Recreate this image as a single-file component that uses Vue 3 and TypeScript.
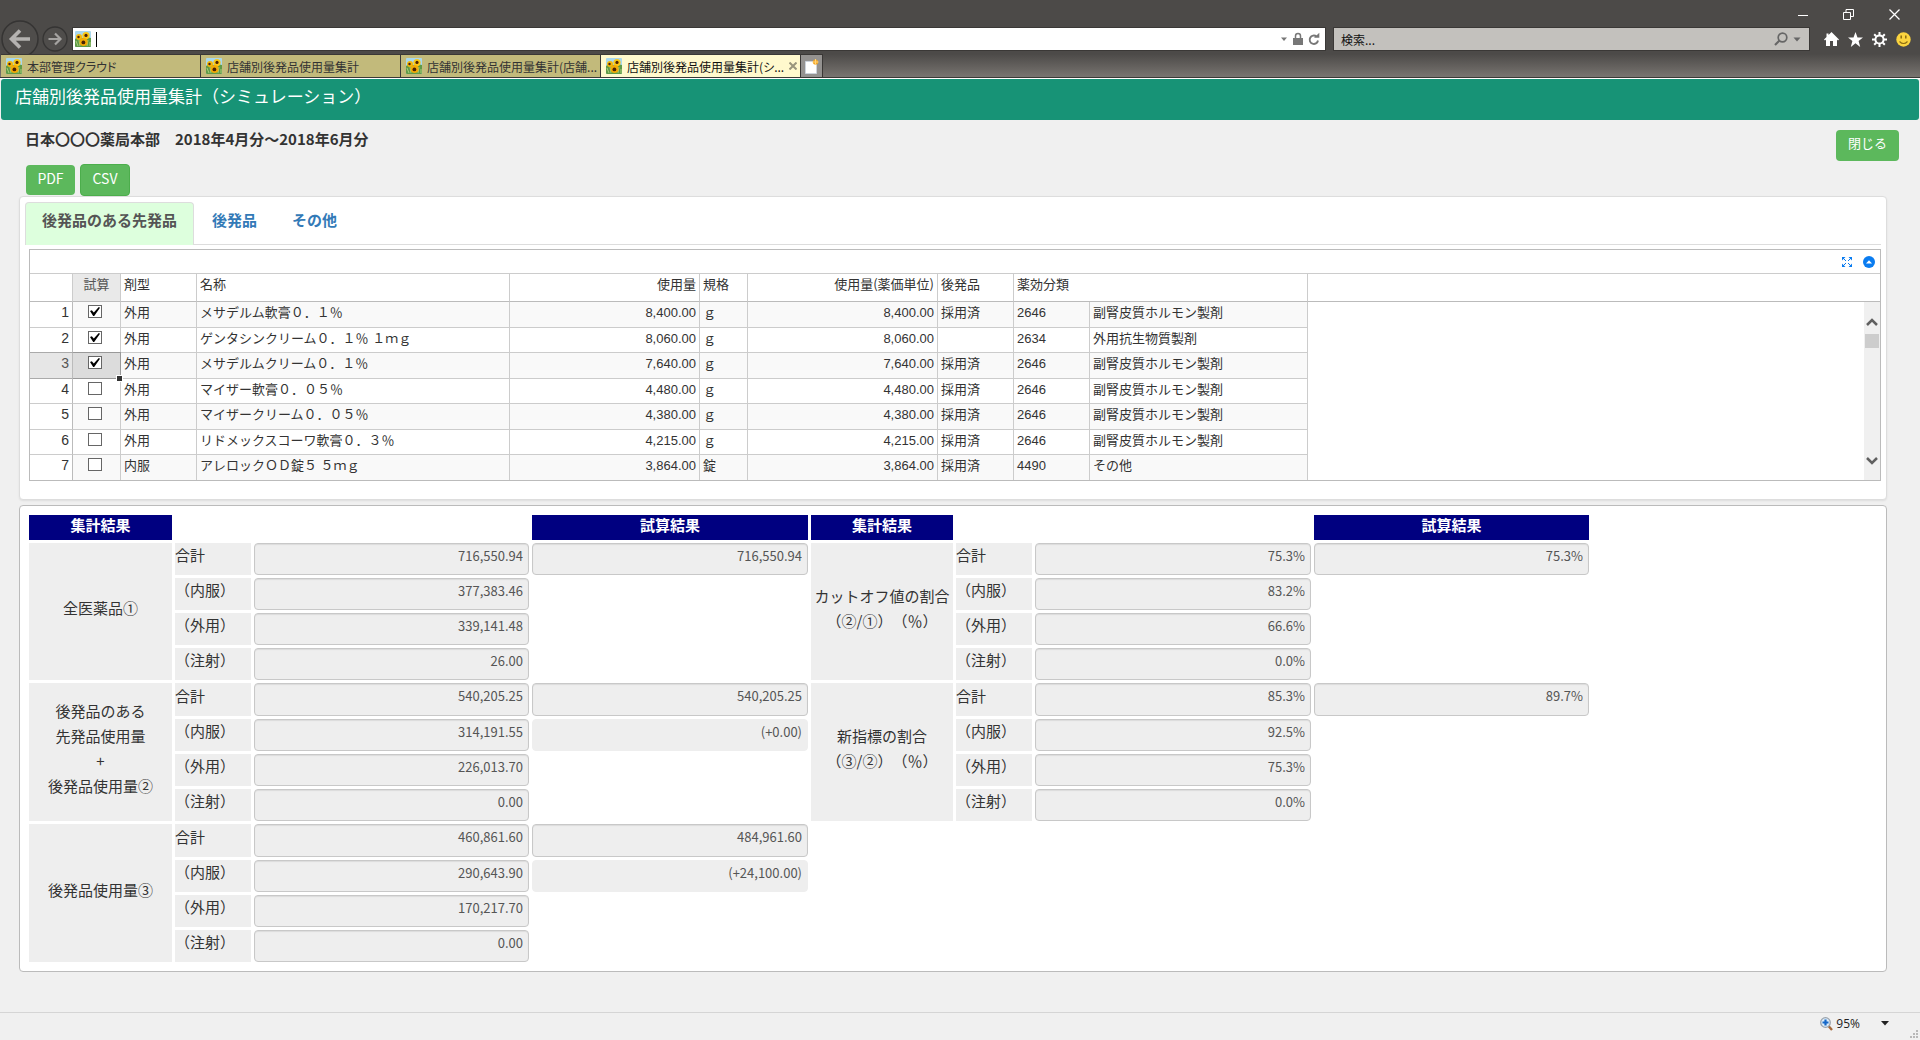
<script setup lang="ts">
import { reactive, ref } from 'vue'

interface Drug {
  trial: boolean
  form: string
  name: string
  amount: string
  unit: string
  generic: string
  code: string
  category: string
}

interface Line {
  label: string
  value: string
  trial?: string
  plain?: boolean
}

interface Group {
  title: string[]
  lines: Line[]
}

const browserTabs = [
  '本部管理クラウド',
  '店舗別後発品使用量集計',
  '店舗別後発品使用量集計(店舗...',
  '店舗別後発品使用量集計(シ...',
]
const activeBrowserTab = 3

const tabs = ['後発品のある先発品', '後発品', 'その他']
const activeTab = ref(0)
const selectedRow = ref(2)

const steroid = '副腎皮質ホルモン製剤'
const drugs = reactive<Drug[]>([
  { trial: true, form: '外用', name: 'メサデルム軟膏０．１％', amount: '8,400.00', unit: 'ｇ', generic: '採用済', code: '2646', category: steroid },
  { trial: true, form: '外用', name: 'ゲンタシンクリーム０．１％ １ｍｇ', amount: '8,060.00', unit: 'ｇ', generic: '', code: '2634', category: '外用抗生物質製剤' },
  { trial: true, form: '外用', name: 'メサデルムクリーム０．１％', amount: '7,640.00', unit: 'ｇ', generic: '採用済', code: '2646', category: steroid },
  { trial: false, form: '外用', name: 'マイザー軟膏０．０５％', amount: '4,480.00', unit: 'ｇ', generic: '採用済', code: '2646', category: steroid },
  { trial: false, form: '外用', name: 'マイザークリーム０．０５％', amount: '4,380.00', unit: 'ｇ', generic: '採用済', code: '2646', category: steroid },
  { trial: false, form: '外用', name: 'リドメックスコーワ軟膏０．３％', amount: '4,215.00', unit: 'ｇ', generic: '採用済', code: '2646', category: steroid },
  { trial: false, form: '内服', name: 'アレロックＯＤ錠５ ５ｍｇ', amount: '3,864.00', unit: '錠', generic: '採用済', code: '4490', category: 'その他' },
])

const usage: Group[] = [
  {
    title: ['全医薬品①'],
    lines: [
      { label: '合計', value: '716,550.94', trial: '716,550.94' },
      { label: '（内服）', value: '377,383.46' },
      { label: '（外用）', value: '339,141.48' },
      { label: '（注射）', value: '26.00' },
    ],
  },
  {
    title: ['後発品のある', '先発品使用量', '+', '後発品使用量②'],
    lines: [
      { label: '合計', value: '540,205.25', trial: '540,205.25' },
      { label: '（内服）', value: '314,191.55', trial: '(+0.00)', plain: true },
      { label: '（外用）', value: '226,013.70' },
      { label: '（注射）', value: '0.00' },
    ],
  },
  {
    title: ['後発品使用量③'],
    lines: [
      { label: '合計', value: '460,861.60', trial: '484,961.60' },
      { label: '（内服）', value: '290,643.90', trial: '(+24,100.00)', plain: true },
      { label: '（外用）', value: '170,217.70' },
      { label: '（注射）', value: '0.00' },
    ],
  },
]

const ratios: Group[] = [
  {
    title: ['カットオフ値の割合', '（②/①）（％）'],
    lines: [
      { label: '合計', value: '75.3%', trial: '75.3%' },
      { label: '（内服）', value: '83.2%' },
      { label: '（外用）', value: '66.6%' },
      { label: '（注射）', value: '0.0%' },
    ],
  },
  {
    title: ['新指標の割合', '（③/②）（％）'],
    lines: [
      { label: '合計', value: '85.3%', trial: '89.7%' },
      { label: '（内服）', value: '92.5%' },
      { label: '（外用）', value: '75.3%' },
      { label: '（注射）', value: '0.0%' },
    ],
  },
]
</script>

<template>
  <svg class="defs" aria-hidden="true">
    <symbol id="sunflower" viewBox="0 0 16 16">
      <rect width="16" height="16" rx="1" fill="#a9d8ee" />
      <path d="M0 8l3-2 4 1 4-1 5 1v8a1 1 0 0 1-1 1H1a1 1 0 0 1-1-1z" fill="#5f9a48" />
      <path d="M1 10l2 5M4 9l1 6M13 9l-1 6M15 11v4" stroke="#a8cf7c" />
      <circle cx="4" cy="6" r="3" fill="#f5b90c" />
      <circle cx="11" cy="4.600" r="3.600" fill="#fbc816" />
      <circle cx="8.600" cy="11" r="4.100" fill="#f2ac08" />
      <circle cx="3.500" cy="6" r="1.200" fill="#4a2306" />
      <circle cx="11" cy="4.400" r="1.600" fill="#4a2306" />
      <circle cx="8.400" cy="11.400" r="1.900" fill="#4a2306" />
    </symbol>
  </svg>

  <div class="window">
    <header class="chrome">
      <div class="caption">
        <button type="button" aria-label="最小化">
          <svg width="10" height="10"><path d="M0 5.500h10" stroke="#fff" /></svg>
        </button>
        <button type="button" aria-label="元に戻す">
          <svg width="11" height="11" fill="none" stroke="#fff"><path d="M.5 3.500h7v7h-7zM3 3V.5h7.500v7H8" /></svg>
        </button>
        <button type="button" aria-label="ウィンドウを閉じる">
          <svg width="11" height="11" stroke="#fff" stroke-width="1.300"><path d="M.5.5l10 10M10.500.5l-10 10" /></svg>
        </button>
      </div>

      <div class="toolbar">
        <button type="button" class="back" aria-label="戻る">
          <svg width="38" height="38" viewBox="0 0 38 38" fill="none">
            <circle cx="19" cy="19" r="18" stroke="#353433" stroke-width="1.500" fill="#4f4d4b" />
            <path d="M29 19H12M19 10.500L10.500 19l8.500 8.500" stroke="#b4b2b0" stroke-width="3.600" />
          </svg>
        </button>
        <button type="button" class="forward" aria-label="進む">
          <svg width="26" height="26" viewBox="0 0 26 26" fill="none">
            <circle cx="13" cy="13" r="12" stroke="#353433" stroke-width="1.300" fill="#4f4d4b" />
            <path d="M6.500 13h11M13 7.500l5.500 5.500-5.500 5.500" stroke="#a5a3a1" stroke-width="2.200" />
          </svg>
        </button>
        <div class="address">
          <svg width="16" height="16"><use href="#sunflower" /></svg>
          <span class="caret"></span>
          <input type="text" aria-label="アドレス" />
          <svg width="8" height="5"><path d="M1 .5h6L4 4z" fill="#777" /></svg>
          <svg width="10" height="14" viewBox="0 0 10 14">
            <path d="M2.500 6V4a2.500 2.500 0 0 1 5 0v2" fill="none" stroke="#777" stroke-width="1.500" />
            <path d="M0 6h10v7H0z" fill="#777" />
          </svg>
          <svg width="12" height="14" viewBox="0 0 12 14">
            <path d="M8.500 4.500A4.200 4.200 0 1 0 10 8.500" fill="none" stroke="#777" stroke-width="1.900" />
            <path d="M6 5.800h5.300V.8z" fill="#777" />
          </svg>
        </div>
        <div class="search">
          <input type="text" aria-label="検索" placeholder="検索..." />
          <svg width="14" height="14" viewBox="0 0 14 14" fill="none" stroke="#666">
            <circle cx="8.500" cy="5.500" r="4.300" stroke-width="1.700" />
            <path d="M5.500 8.500L1 13" stroke-width="2.200" />
          </svg>
          <svg width="8" height="5"><path d="M.5.5h7L4 4.500z" fill="#666" /></svg>
        </div>
        <div class="tools">
          <button type="button" aria-label="ホーム">
            <svg width="15" height="14" viewBox="0 0 15 14" fill="#fff">
              <path d="M7.500 0L15 7.500l-1 1-1-1V14H9V9H6v5H2V7.500l-1 1-1-1L2.500 5V1.500h2V3z" />
            </svg>
          </button>
          <button type="button" aria-label="お気に入り">
            <svg width="15" height="15" viewBox="0 0 15 15" fill="#fff">
              <path d="M7.500 0l2 5.400H15l-4.400 3.500L12.200 15 7.500 11.300 2.800 15l1.600-6.100L0 5.400h5.500z" />
            </svg>
          </button>
          <button type="button" aria-label="設定">
            <svg width="15" height="15" viewBox="0 0 15 15" fill="none" stroke="#fff">
              <circle cx="7.500" cy="7.500" r="4.100" stroke-width="2" />
              <path d="M7.500 0v3M7.500 12v3M0 7.500h3M12 7.500h3M2.200 2.200l2 2M10.800 10.800l2 2M12.800 2.200l-2 2M4.200 10.800l-2 2" stroke-width="2" />
            </svg>
          </button>
          <button type="button" aria-label="フィードバック">
            <svg width="15" height="15" viewBox="0 0 15 15" fill="none">
              <circle cx="7.500" cy="7.500" r="7.200" fill="#fbd43f" />
              <path d="M5.200 3.500v3M9.800 3.500v3" stroke="#8a6a10" stroke-width="1.500" />
              <path d="M3.500 9.500q4 4 8 0" stroke="#8a6a10" stroke-width="1.100" />
            </svg>
          </button>
        </div>
      </div>

      <div class="tabstrip">
        <button
          v-for="(tab, i) in browserTabs"
          :key="tab"
          type="button"
          class="btab"
          :class="{ active: i === activeBrowserTab }"
        >
          <svg width="16" height="16"><use href="#sunflower" /></svg>
          <span>{{ tab }}</span>
          <svg v-if="i === activeBrowserTab" class="x" width="8" height="8" stroke="#99957c" stroke-width="2"><path d="M.5.5l7 7M7.500.5l-7 7" /></svg>
        </button>
        <button type="button" class="newtab" aria-label="新しいタブ">
          <svg width="14" height="15" viewBox="0 0 14 15">
            <path d="M.5 2.500h11v12H.5z" fill="#fff" stroke="#ccd3dc" />
            <circle cx="10.500" cy="3" r="2.600" fill="#f5a623" />
            <path d="M10.500 0v6M7.500 3h6" stroke="#ffd37a" />
          </svg>
        </button>
      </div>
    </header>

    <main>
      <h1>店舗別後発品使用量集計（シミュレーション）</h1>

      <div class="heading">
        <div>
          <h2>日本〇〇〇薬局本部　2018年4月分～2018年6月分</h2>
          <div class="exports">
            <button type="button" class="btn">PDF</button>
            <button type="button" class="btn outlined">CSV</button>
          </div>
        </div>
        <button type="button" class="btn close">閉じる</button>
      </div>

      <section class="panel list">
        <nav>
          <a
            v-for="(tab, i) in tabs"
            :key="tab"
            href="#"
            :class="{ active: i === activeTab }"
            @click.prevent="activeTab = i"
          >{{ tab }}</a>
        </nav>

        <div class="grid">
          <div class="gridbar">
            <button type="button" aria-label="全画面">
              <svg width="10" height="10" viewBox="0 0 10 10" fill="#0a7cf0">
                <path d="M0 0h3.500L0 3.500zM10 0v3.500L6.500 0zM0 10V6.500L3.500 10zM10 10H6.500L10 6.500z" />
                <path d="M1 1l3 3M9 1L6 4M1 9l3-3M9 9L6 6" stroke="#0a7cf0" />
              </svg>
            </button>
            <button type="button" aria-label="折りたたむ">
              <svg width="12" height="12" viewBox="0 0 12 12">
                <circle cx="6" cy="6" r="6" fill="#0a7cf0" />
                <path d="M3 7.500L6 4.300l3 3.200z" fill="#fff" />
              </svg>
            </button>
          </div>
          <div class="gridbody">
            <table class="drugs">
              <colgroup>
                <col class="c-no" /><col class="c-check" /><col class="c-form" /><col class="c-name" />
                <col class="c-amount" /><col class="c-unit" /><col class="c-amount" /><col class="c-code" />
                <col class="c-code" /><col class="c-category" />
              </colgroup>
              <thead>
                <tr>
                  <th></th>
                  <th class="check on">試算</th>
                  <th>剤型</th>
                  <th>名称</th>
                  <th class="num">使用量</th>
                  <th>規格</th>
                  <th class="num">使用量(薬価単位)</th>
                  <th>後発品</th>
                  <th colspan="2">薬効分類</th>
                </tr>
              </thead>
              <tbody>
                <tr v-for="(d, i) in drugs" :key="d.name">
                  <th scope="row" :class="{ on: i === selectedRow }">{{ i + 1 }}</th>
                  <td class="check" :class="{ selected: i === selectedRow }" @click="selectedRow = i">
                    <input v-model="d.trial" type="checkbox" :aria-label="d.name" />
                  </td>
                  <td>{{ d.form }}</td>
                  <td>{{ d.name }}</td>
                  <td class="num">{{ d.amount }}</td>
                  <td>{{ d.unit }}</td>
                  <td class="num">{{ d.amount }}</td>
                  <td>{{ d.generic }}</td>
                  <td>{{ d.code }}</td>
                  <td>{{ d.category }}</td>
                </tr>
              </tbody>
            </table>
            <div class="track">
              <div class="bar">
                <svg width="12" height="8"><path d="M1 7l5-5 5 5" fill="none" stroke="#606060" stroke-width="2.500" /></svg>
                <div class="thumb"></div>
                <svg class="down" width="12" height="8"><path d="M1 1l5 5 5-5" fill="none" stroke="#606060" stroke-width="2.500" /></svg>
              </div>
            </div>
          </div>
        </div>
      </section>

      <section class="panel results">
        <table class="totals">
          <colgroup>
            <col class="t-group" /><col class="t-label" /><col class="t-value" /><col class="t-wide" />
            <col class="t-ratio" /><col class="t-label" /><col class="t-wide" /><col class="t-value" />
          </colgroup>
          <thead>
            <tr>
              <th>集計結果</th>
              <td colspan="2"></td>
              <th>試算結果</th>
              <th>集計結果</th>
              <td colspan="2"></td>
              <th>試算結果</th>
            </tr>
          </thead>
          <tbody v-for="(g, gi) in usage" :key="gi">
            <tr v-for="(line, li) in g.lines" :key="line.label">
              <template v-for="(side, si) in [g, ratios[gi]]" :key="si">
                <template v-if="side">
                  <th v-if="li === 0" class="group" rowspan="4" scope="rowgroup">
                    <div v-for="t in side.title" :key="t">{{ t }}</div>
                  </th>
                  <th class="label" scope="row">{{ side.lines[li].label }}</th>
                  <td><input readonly :value="side.lines[li].value" :aria-label="side.title.join('') + side.lines[li].label" /></td>
                  <td>
                    <input
                      v-if="side.lines[li].trial"
                      readonly
                      :class="{ plain: side.lines[li].plain }"
                      :value="side.lines[li].trial"
                      :aria-label="'試算 ' + side.title.join('') + side.lines[li].label"
                    />
                  </td>
                </template>
              </template>
            </tr>
          </tbody>
        </table>
      </section>
    </main>

    <footer>
      <button type="button" class="zoom">
        <svg width="13" height="14" viewBox="0 0 13 14" fill="none">
          <path d="M8.500 9l3.500 4" stroke="#a5683a" stroke-width="2.400" />
          <circle cx="5.500" cy="5.500" r="4.800" fill="#dcecf8" stroke="#9aa3ad" stroke-width="1.300" />
          <path d="M5.500 2.500v6M2.500 5.500h6" stroke="#1467c8" stroke-width="2.200" />
        </svg>
        <span>95%</span>
        <svg width="8" height="5"><path d="M0 0h8L4 4.500z" fill="#222" /></svg>
      </button>
      <svg class="grip" width="9" height="9" fill="#b8b8b8">
        <path d="M6 0h2v2H6zM3 3h2v2H3zM6 3h2v2H6zM0 6h2v2H0zM3 6h2v2H3zM6 6h2v2H6z" />
      </svg>
    </footer>
  </div>
</template>

<style>
body {
  margin: 0;
  background: #f0f0f0;
}
</style>

<style scoped>
.defs {
  position: absolute;
  width: 0;
  height: 0;
}

.window {
  display: flex;
  flex-direction: column;
  min-height: 100vh;
  font-family: "Noto Sans CJK JP", sans-serif;
  font-size: 15px;
  color: #333;
  text-spacing-trim: space-all;
}

button,
input {
  font-family: inherit;
}

button {
  padding: 0;
  border: 0;
  background: none;
  color: inherit;
}

svg {
  display: block;
  flex: none;
}

/* browser frame */
.chrome {
  background: #4c4a48;
  border-bottom: 1px solid #fff;
}

.caption {
  display: flex;
  justify-content: flex-end;
  align-items: center;
  gap: 35px;
  height: 22px;
  padding: 7px 20px 0 0;
  box-sizing: border-box;
}

.toolbar {
  display: flex;
  align-items: center;
  height: 32px;
  padding-top: 2px;
  box-sizing: border-box;
}

.back {
  margin-left: 1px;
}

.forward {
  margin: 0 4px 0 3px;
}

.address,
.search {
  display: flex;
  align-items: center;
  height: 24px;
  border: 1px solid #3a3836;
  box-sizing: border-box;
  background: #fff;
}

.address {
  flex: 1;
  gap: 5px;
  padding: 0 5px 0 2px;
}

.caret {
  width: 1px;
  height: 15px;
  background: #000;
}

.address input,
.search input {
  flex: 1;
  min-width: 0;
  padding: 0;
  border: 0;
  outline: 0;
  background: none;
  font-size: 12px;
}

.search {
  gap: 5px;
  width: 477px;
  margin-left: 7px;
  padding: 0 8px 0 7px;
  background: #c3c1bd;
}

.search input::placeholder {
  color: #111;
  opacity: 1;
}

.tools {
  display: flex;
  gap: 9px;
  margin: 0 9px 0 14px;
}

.tabstrip {
  position: relative;
  display: flex;
  height: 23px;
  padding-left: 1px;
  border-bottom: 1px solid #3a3836;
  background: linear-gradient(#4c4a48, #787470);
}

.btab {
  display: flex;
  align-items: center;
  gap: 5px;
  width: 200px;
  padding: 0 8px 0 5px;
  border: solid #3a3836;
  border-width: 1px 1px 0 0;
  background: #c2ba7b;
  font-size: 12px;
  font-feature-settings: "palt";
  white-space: nowrap;
  color: #333;
}

.btab.active {
  background: #fff9cd;
  color: #111;
}

.btab .x {
  margin-left: auto;
}

.newtab {
  display: flex;
  align-items: center;
  justify-content: center;
  width: 22px;
  background: #949290;
  border: solid #3a3836;
  border-width: 1px 1px 0 0;
}

/* page */
main {
  flex: 1;
}

h1 {
  margin: 0 1px;
  padding: 0 14px 8px;
  border-radius: 3px;
  background: #179376;
  color: #fff;
  font-size: 17px;
  font-weight: 400;
  line-height: 33px;
}

.heading {
  display: flex;
  justify-content: space-between;
  padding: 7px 21px 0 25px;
}

h2 {
  margin: 0;
  font-size: 15px;
  line-height: 24px;
}

.exports {
  display: flex;
  align-items: center;
  gap: 5px;
  margin: 13px 0 0 1px;
}

.btn {
  width: 49px;
  height: 30px;
  padding-bottom: 4px;
  border-radius: 4px;
  background: #5cb85c;
  color: #fff;
  font-size: 14px;
}

.outlined {
  width: 50px;
  height: 32px;
  border: 1px solid #4cae4c;
}

.close {
  width: 63px;
  height: 31px;
  margin-top: 3px;
  padding-bottom: 6px;
  font-size: 13px;
}

.panel {
  margin: 0 33px 5px 19px;
  border: 1px solid #ddd;
  border-radius: 4px;
  background: #fff;
}

.list {
  padding: 5px 5px 18px;
  box-shadow: 0 1px 2px rgba(0, 0, 0, 0.08);
}

nav {
  display: flex;
  gap: 1px;
  border-bottom: 1px solid #ddd;
}

nav a {
  height: 42px;
  padding: 0 16px;
  border: 1px solid transparent;
  border-bottom: 0;
  border-radius: 4px 4px 0 0;
  box-sizing: border-box;
  color: #337ab7;
  font-weight: 700;
  line-height: 34px;
  text-decoration: none;
}

nav a.active {
  margin-bottom: -1px;
  height: 43px;
  border-color: #ddd;
  background: #dfd;
  color: #555;
}

.grid {
  margin: 4px 0 0 4px;
  border: 1px solid #bbb;
}

.gridbar {
  display: flex;
  justify-content: flex-end;
  align-items: center;
  gap: 11px;
  height: 23px;
  padding-right: 5px;
  border-bottom: 1px solid #ccc;
}

.gridbody {
  display: flex;
}

.drugs {
  width: 1278px;
  table-layout: fixed;
  border-spacing: 0;
  font-size: 13px;
  line-height: 18px;
}

.c-no { width: 43px; }
.c-check { width: 48px; }
.c-form { width: 76px; }
.c-name { width: 313px; }
.c-amount { width: 190px; }
.c-unit { width: 48px; }
.c-code { width: 76px; }
.c-category { width: 218px; }

.drugs th,
.drugs td {
  height: 25px;
  padding: 1px 3px 0;
  border: solid #ccc;
  border-width: 0 1px 1px 0;
  box-sizing: border-box;
  font-weight: 400;
  text-align: left;
  vertical-align: top;
  white-space: nowrap;
}

.drugs td {
  padding-top: 2px;
  font-family: "Liberation Sans", "Noto Sans CJK JP", sans-serif;
}

.drugs thead th {
  height: 28px;
  border-bottom-color: #bbb;
}

.drugs tbody th {
  border-right-color: #bbb;
  font-family: "Liberation Sans", sans-serif;
  font-size: 14px;
  text-align: right;
}

.drugs tbody tr:nth-child(odd) td,
.drugs tbody tr:nth-child(odd) th {
  height: 26px;
}

.drugs tbody tr:nth-child(odd) td {
  background: #f9f9f9;
}

.drugs tbody tr:last-child td,
.drugs tbody tr:last-child th {
  height: 25px;
  border-bottom: 0;
}

.drugs .num {
  text-align: right;
}

.drugs .check {
  text-align: center;
}

.drugs td.check {
  padding-right: 6px;
}

.drugs thead .on {
  background: #e9e9e9;
  color: #555;
}

.drugs tbody .on {
  border-bottom-color: #aaa;
  background: #e6e6e6;
  box-shadow: 0 -1px #aaa;
  color: #555;
}

.drugs tbody tr:nth-child(odd) .selected {
  position: relative;
  background: #dcdcdc;
  box-shadow: 0 -1px #999;
  border-color: #999;
}

.selected::after {
  content: "";
  position: absolute;
  right: -3px;
  bottom: -4px;
  width: 5px;
  height: 5px;
  border: 1px solid #fff;
  background: #333;
}

.check input {
  display: block;
  appearance: none;
  width: 14px;
  height: 13px;
  margin: 1px auto 0;
  border: 1px solid #666;
  background: #fff;
}

.check input:checked::after {
  content: "";
  display: block;
  width: 10px;
  height: 9px;
  margin: 1px;
  background: #000;
  clip-path: polygon(0 45%, 18% 35%, 38% 62%, 88% 0, 100% 8%, 42% 100%, 32% 100%);
}

.track {
  display: flex;
  flex: 1;
  flex-direction: column;
  justify-content: flex-end;
}

.track::before {
  content: "";
  height: 27px;
  border-bottom: 1px solid #bbb;
}

.bar {
  display: flex;
  flex: 1;
  flex-direction: column;
  align-items: center;
  align-self: flex-end;
  width: 16px;
  padding: 16px 0 15px;
  box-sizing: border-box;
  background: #f0f0f0;
}

.thumb {
  width: 14px;
  height: 14px;
  margin-top: 8px;
  background: #cdcdcd;
}

.down {
  margin-top: auto;
}

.results {
  padding: 6px;
  border-color: #bbb;
}

.totals {
  width: 1566px;
  table-layout: fixed;
  border-spacing: 3px;
  line-height: 25px;
}

.t-group { width: 143px; }
.t-ratio { width: 142px; }
.t-label { width: 76px; }
.t-value { width: 275px; }
.t-wide { width: 276px; }

.totals th,
.totals td {
  height: 32px;
  padding: 0;
  box-sizing: border-box;
  font-weight: 400;
}

.totals tbody + tbody tr:first-child > :not(.group) {
  height: 33px;
}

.totals thead th {
  height: 25px;
  padding-bottom: 6px;
  background: #000080;
  color: #fff;
  font-weight: 700;
  line-height: 19px;
}

.totals thead td {
  height: 25px;
}

.totals .group,
.totals .label {
  padding-bottom: 8px;
  background: #eee;
}

.totals .group {
  white-space: nowrap;
}

.totals .label {
  line-height: 24px;
  text-align: left;
}

.totals input {
  display: block;
  width: 100%;
  height: 100%;
  padding: 0 5px 8px;
  border: 1px solid #c8c8c8;
  border-radius: 4px;
  outline: 0;
  box-sizing: border-box;
  background: #eee;
  box-shadow: inset 0 1px 1px rgba(0, 0, 0, 0.08);
  color: #555;
  font-size: 13px;
  text-align: right;
}

.totals input.plain {
  border-color: #eee;
  box-shadow: none;
}

footer {
  display: flex;
  justify-content: flex-end;
  height: 27px;
  border-top: 1px solid #d5d5d5;
}

.zoom {
  display: flex;
  align-items: center;
  gap: 3px;
  margin-bottom: 6px;
  font-family: "Open Sans", sans-serif;
  font-size: 12px;
  color: #222;
}

.zoom svg:last-child {
  margin-left: 18px;
}

.grip {
  align-self: flex-end;
  margin: 0 1px 1px 21px;
}
</style>
